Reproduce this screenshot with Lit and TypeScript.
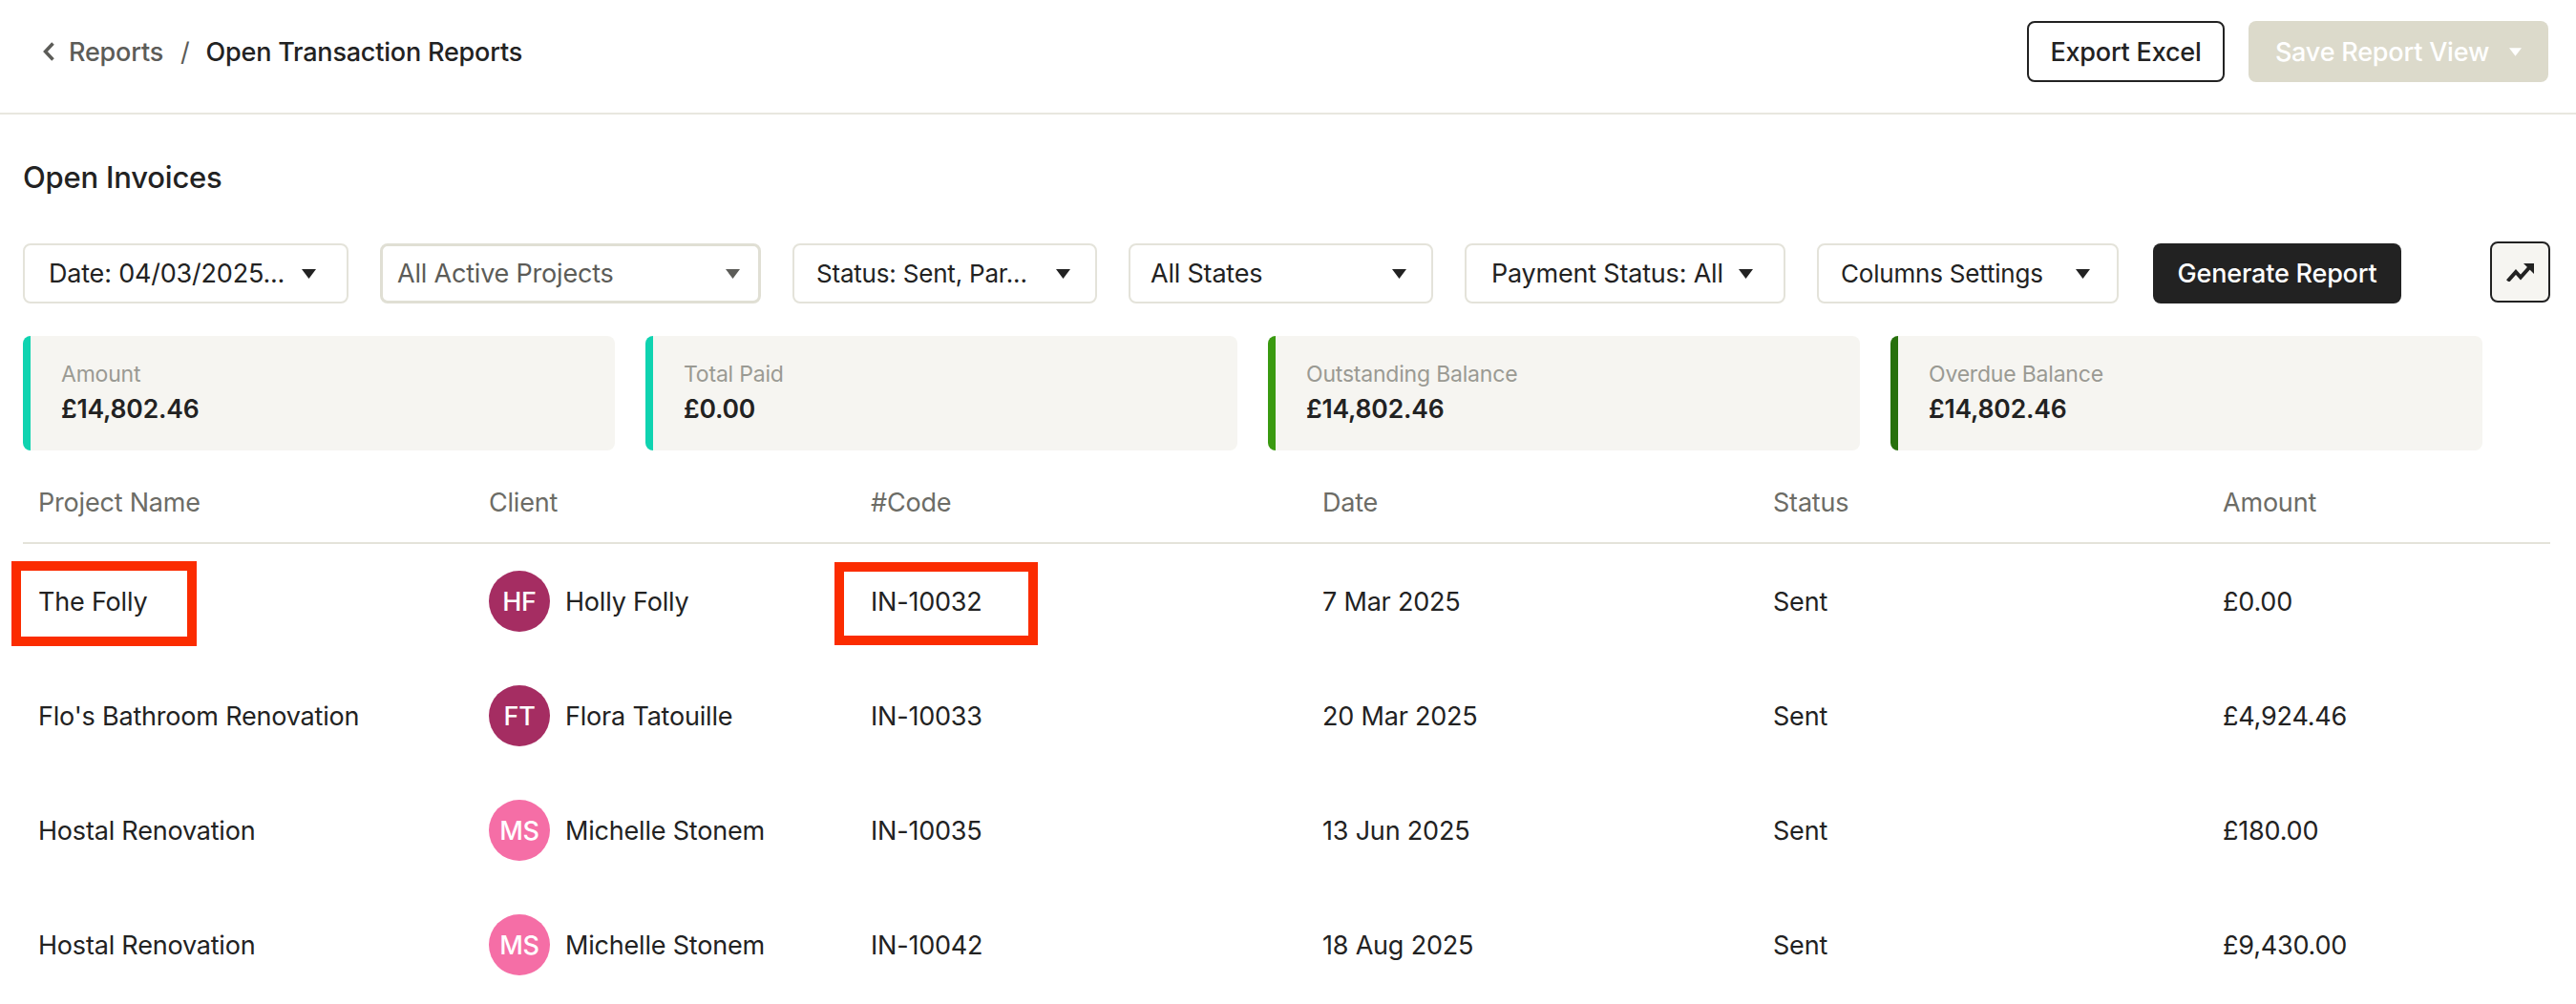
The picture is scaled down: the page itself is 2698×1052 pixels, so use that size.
import { LitElement, html, css } from "lit";
import { customElement } from "lit/decorators.js";

const caret = (color = "#222") => html`<svg class="caret" width="15" height="10" viewBox="0 0 15 10"><path d="M0 0h15L7.5 10z" fill=${color}></path></svg>`;

const filters = [
    { label: "Date: 04/03/2025...", cls: "f-date" },
    { label: "All Active Projects", cls: "f-project" },
    { label: "Status: Sent, Par...", cls: "f-status" },
    { label: "All States", cls: "f-states" },
    { label: "Payment Status: All", cls: "f-payment" },
    { label: "Columns Settings", cls: "f-columns" },
];

const cards = [
    { label: "Amount", value: "£14,802.46", color: "#0fd3b0" },
    { label: "Total Paid", value: "£0.00", color: "#0fd3b0" },
    { label: "Outstanding Balance", value: "£14,802.46", color: "#3a9a10" },
    { label: "Overdue Balance", value: "£14,802.46", color: "#27700c" },
];

const rows = [
    { project: "The Folly", initials: "HF", client: "Holly Folly", tone: "#a52d62", code: "IN-10032", date: "7 Mar 2025", amount: "£0.00" },
    { project: "Flo's Bathroom Renovation", initials: "FT", client: "Flora Tatouille", tone: "#a52d62", code: "IN-10033", date: "20 Mar 2025", amount: "£4,924.46" },
    { project: "Hostal Renovation", initials: "MS", client: "Michelle Stonem", tone: "#f56ea6", code: "IN-10035", date: "13 Jun 2025", amount: "£180.00" },
    { project: "Hostal Renovation", initials: "MS", client: "Michelle Stonem", tone: "#f56ea6", code: "IN-10042", date: "18 Aug 2025", amount: "£9,430.00" },
];

@customElement("app-root")
export class AppRoot extends LitElement {
    static styles = css`
    :host {
      display: block;
      position: relative;
      height: 1052px;
      overflow: hidden;
      background: #fff;
      color: #222;
      font-family: "Inter", "Noto Sans", sans-serif;
      font-size: 27px;
      letter-spacing: -0.2px;
    }

    .topbar {
      box-sizing: border-box;
      height: 120px;
      border-bottom: 2px solid #e8e7df;
      display: flex;
      align-items: center;
      justify-content: space-between;
      padding: 0 29px 10px 45px;
    }

    .crumbs {
      display: flex;
      align-items: center;
      font-weight: 500;
    }

    .crumbs .back { margin-right: 15px; }
    .crumbs .parent { color: #5c5c58; }
    .crumbs .sep { color: #5c5c58; margin: 0 17px 0 18px; font-weight: 400; }

    .actions { display: flex; gap: 25px; }

    .btn {
      box-sizing: border-box;
      height: 64px;
      border-radius: 8px;
      display: flex;
      align-items: center;
      justify-content: center;
      font-weight: 500;
    }

    .btn.export { width: 207px; border: 2px solid #222; background: #fff; }
    .btn.save { width: 314px; background: #dcdacb; color: #fff; gap: 21px; }
    .btn.save .caret { width: 13px; height: 9px; }
    .btn.generate { width: 260px; background: #222; color: #fff; margin-left: 3px; height: 63px; }
    .btn.chart { width: 63px; margin-left: auto; margin-top: -2px; border: 2px solid #222; background: #f6f5f1; }

    .content { padding: 0 27px 0 24px; }

    h1 {
      margin: 0;
      padding-top: 46px;
      height: 89px;
      font-size: 31px;
      line-height: 40px;
      font-weight: 500;
    }

    .filters { display: flex; gap: 33px; align-items: flex-start; }

    .select {
      box-sizing: border-box;
      height: 63px;
      border: 2px solid #e4e3da;
      border-radius: 8px;
      background: #fff;
      display: flex;
      align-items: center;
      justify-content: space-between;
      white-space: nowrap;
    }

    .f-date { width: 341px; padding: 0 32px 0 25px; }
    .f-project { width: 399px; border: 3px solid #e0dfd4; color: #5c5c58; padding: 0 19px 0 15px; }
    .f-status { width: 319px; padding: 0 26px 0 23px; font-size: 26px; }
    .f-states { width: 319px; padding: 0 26px 0 21px; }
    .f-payment { width: 336px; padding: 0 32px 0 26px; }
    .f-columns { width: 316px; padding: 0 28px 0 23px; font-size: 26px; }

    .cards {
      display: grid;
      grid-template-columns: repeat(4, 620px);
      gap: 32px;
      margin-top: 34px;
    }

    .card {
      box-sizing: border-box;
      height: 120px;
      background: #f6f5f1;
      border-left: 8px solid;
      border-radius: 8px;
      padding: 24px 0 0 32px;
    }

    .card .label { font-size: 23px; line-height: 32px; color: #9a9a93; }
    .card .value { font-size: 26.5px; line-height: 40px; font-weight: 600; }

    .row {
      display: grid;
      grid-template-columns: 472px 400px 473px 472px 471px 1fr;
      align-items: center;
      height: 120px;
    }

    .row > div { padding-left: 16px; }

    .row.head {
      box-sizing: border-box;
      height: 98px;
      padding-top: 13px;
      color: #6c6c66;
      border-bottom: 2px solid #e4e3da;
    }

    .client { display: flex; align-items: center; gap: 16px; }

    .avatar {
      width: 64px;
      height: 64px;
      border-radius: 50%;
      display: flex;
      align-items: center;
      justify-content: center;
      color: #fff;
      font-weight: 500;
    }

    /* red markup drawn on top of the screenshot */
    .mark {
      position: absolute;
      box-sizing: border-box;
      border: 10px solid #fb2c00;
    }
    .mark.one { left: 12px; top: 588px; width: 194px; height: 89px; }
    .mark.two { left: 874px; top: 589px; width: 213px; height: 87px; }
  `;

    render() {
        return html`
      <div class="topbar">
        <div class="crumbs">
          <svg class="back" width="12" height="20" viewBox="0 0 12 20"><path d="M10.5 1.5 2.5 10l8 8.5" fill="none" stroke="#5c5c58" stroke-width="3.5"></path></svg>
          <span class="parent">Reports</span>
          <span class="sep">/</span>
          <span>Open Transaction Reports</span>
        </div>
        <div class="actions">
          <div class="btn export">Export Excel</div>
          <div class="btn save">Save Report View ${caret("#fff")}</div>
        </div>
      </div>
      <div class="content">
        <h1>Open Invoices</h1>
        <div class="filters">
          ${filters.map(f => html`<div class="select ${f.cls}"><span>${f.label}</span>${caret(f.cls === "f-project" ? "#5c5c58" : "#222")}</div>`)}
          <div class="btn generate">Generate Report</div>
          <div class="btn chart">
            <svg width="30" height="20" viewBox="34 33 30 20"><path d="M35.500 52.500 44 43l5 5.500L58 38.500" fill="none" stroke="#222" stroke-width="4"></path><path d="M52 34h11v11z" fill="#222"></path></svg>
          </div>
        </div>
        <div class="cards">
          ${cards.map(c => html`<div class="card" style="border-left-color:${c.color}"><div class="label">${c.label}</div><div class="value">${c.value}</div></div>`)}
        </div>
        <div class="table">
          <div class="row head"><div>Project Name</div><div>Client</div><div>#Code</div><div>Date</div><div>Status</div><div>Amount</div></div>
          ${rows.map(r => html`
            <div class="row">
              <div>${r.project}</div>
              <div class="client"><span class="avatar" style="background:${r.tone}">${r.initials}</span>${r.client}</div>
              <div>${r.code}</div>
              <div>${r.date}</div>
              <div>Sent</div>
              <div>${r.amount}</div>
            </div>`)}
        </div>
      </div>
      <div class="mark one"></div>
      <div class="mark two"></div>
    `;
    }
}
